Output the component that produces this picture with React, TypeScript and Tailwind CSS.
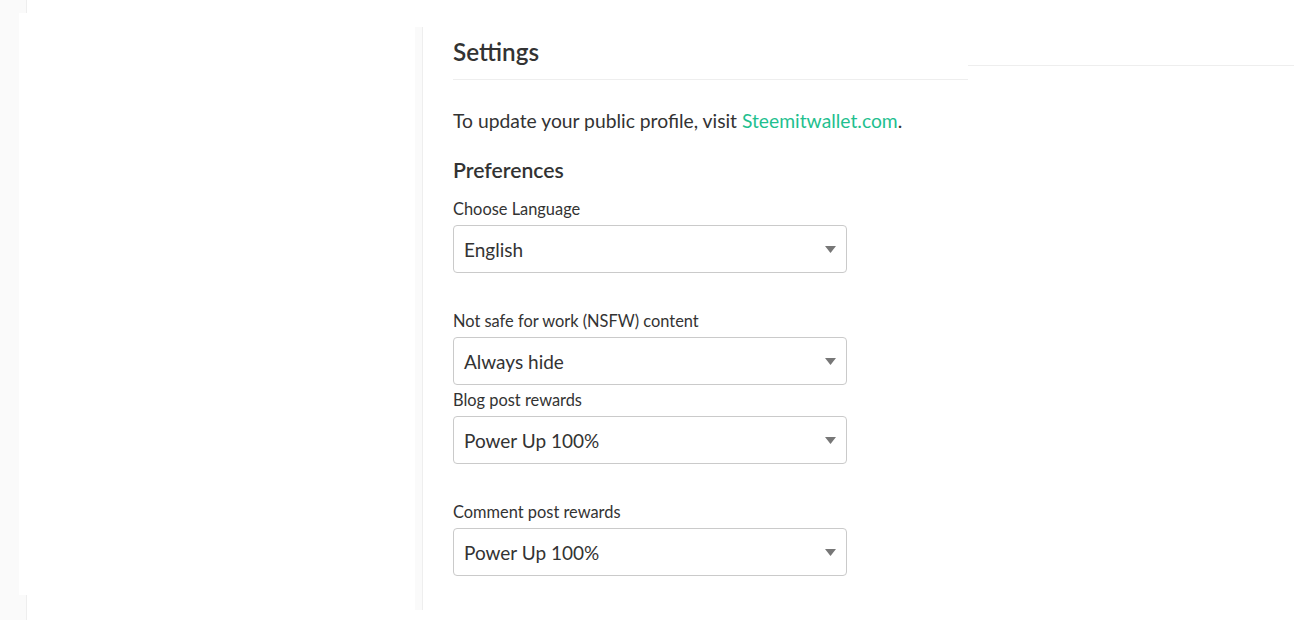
import React from 'react';

const font = { fontFamily: 'Lato, "Noto Sans", sans-serif' };

interface SelectProps {
  label: string;
  value: string;
  gapAfter: string;
}

const FakeSelect: React.FC<SelectProps> = ({ label, value, gapAfter }) => (
  <div className={gapAfter}>
    <div className="text-[16.4px] leading-[24px] text-[#333] mb-[4px]">{label}</div>
    <div className="w-[394px] h-[48px] border border-[#cacaca] rounded-[4px] bg-white flex items-center justify-between pl-[10px] pr-[10px]">
      <span className="text-[19px] leading-[24px] text-[#333] pt-[2px]">{value}</span>
      <svg width="11" height="7" viewBox="0 0 11 7">
        <path d="M0 0 L11 0 L5.5 7 Z" fill="#777" />
      </svg>
    </div>
  </div>
);

export default function App() {
  return (
    <div className="flex w-[1294px] h-[620px] bg-white overflow-hidden" style={font}>
      {/* left sidebar strip */}
      <div className="w-[19px] h-full bg-[#fafafa]" />
      <div className="w-[396px] h-full flex flex-col">
        <div className="h-[13px] flex">
          <div className="w-[8px] bg-[#fafafa] border-r border-[#eee]" />
        </div>
        <div className="h-[582px] bg-white" />
        <div className="flex-1 flex">
          <div className="w-[8px] bg-[#fafafa] border-r border-[#eee]" />
        </div>
      </div>
      <div className="w-[8px] h-full pt-[27px]">
        <div className="h-[583px] bg-[#fafafa] border-r border-[#eee]" />
      </div>

      {/* main */}
      <main className="flex-1 pt-[34px]">
        <div className="flex items-start">
          <div className="ml-[30px] w-[515px] border-b border-[#eee] pb-[9px]">
            <h1 className="text-[24.3px] leading-[36px] font-semibold text-[#333]">Settings</h1>
          </div>
          <div className="flex-1 h-[32px] border-b border-[#eee]" />
        </div>

        <div className="pl-[30px]">
          <p className="mt-[27px] text-[19.3px] leading-[28px] text-[#333]">
            To update your public profile, visit{' '}
            <a className="text-[#1fbf8f]">Steemitwallet.com</a>.
          </p>

          <h2 className="mt-[21px] text-[21.2px] leading-[28px] font-semibold text-[#333]">Preferences</h2>

          <div className="mt-[13px]">
            <FakeSelect label="Choose Language" value="English" gapAfter="mb-[36px]" />
            <FakeSelect label="Not safe for work (NSFW) content" value="Always hide" gapAfter="mb-[3px]" />
            <FakeSelect label="Blog post rewards" value="Power Up 100%" gapAfter="mb-[36px]" />
            <FakeSelect label="Comment post rewards" value="Power Up 100%" gapAfter="" />
          </div>
        </div>
      </main>
    </div>
  );
}
